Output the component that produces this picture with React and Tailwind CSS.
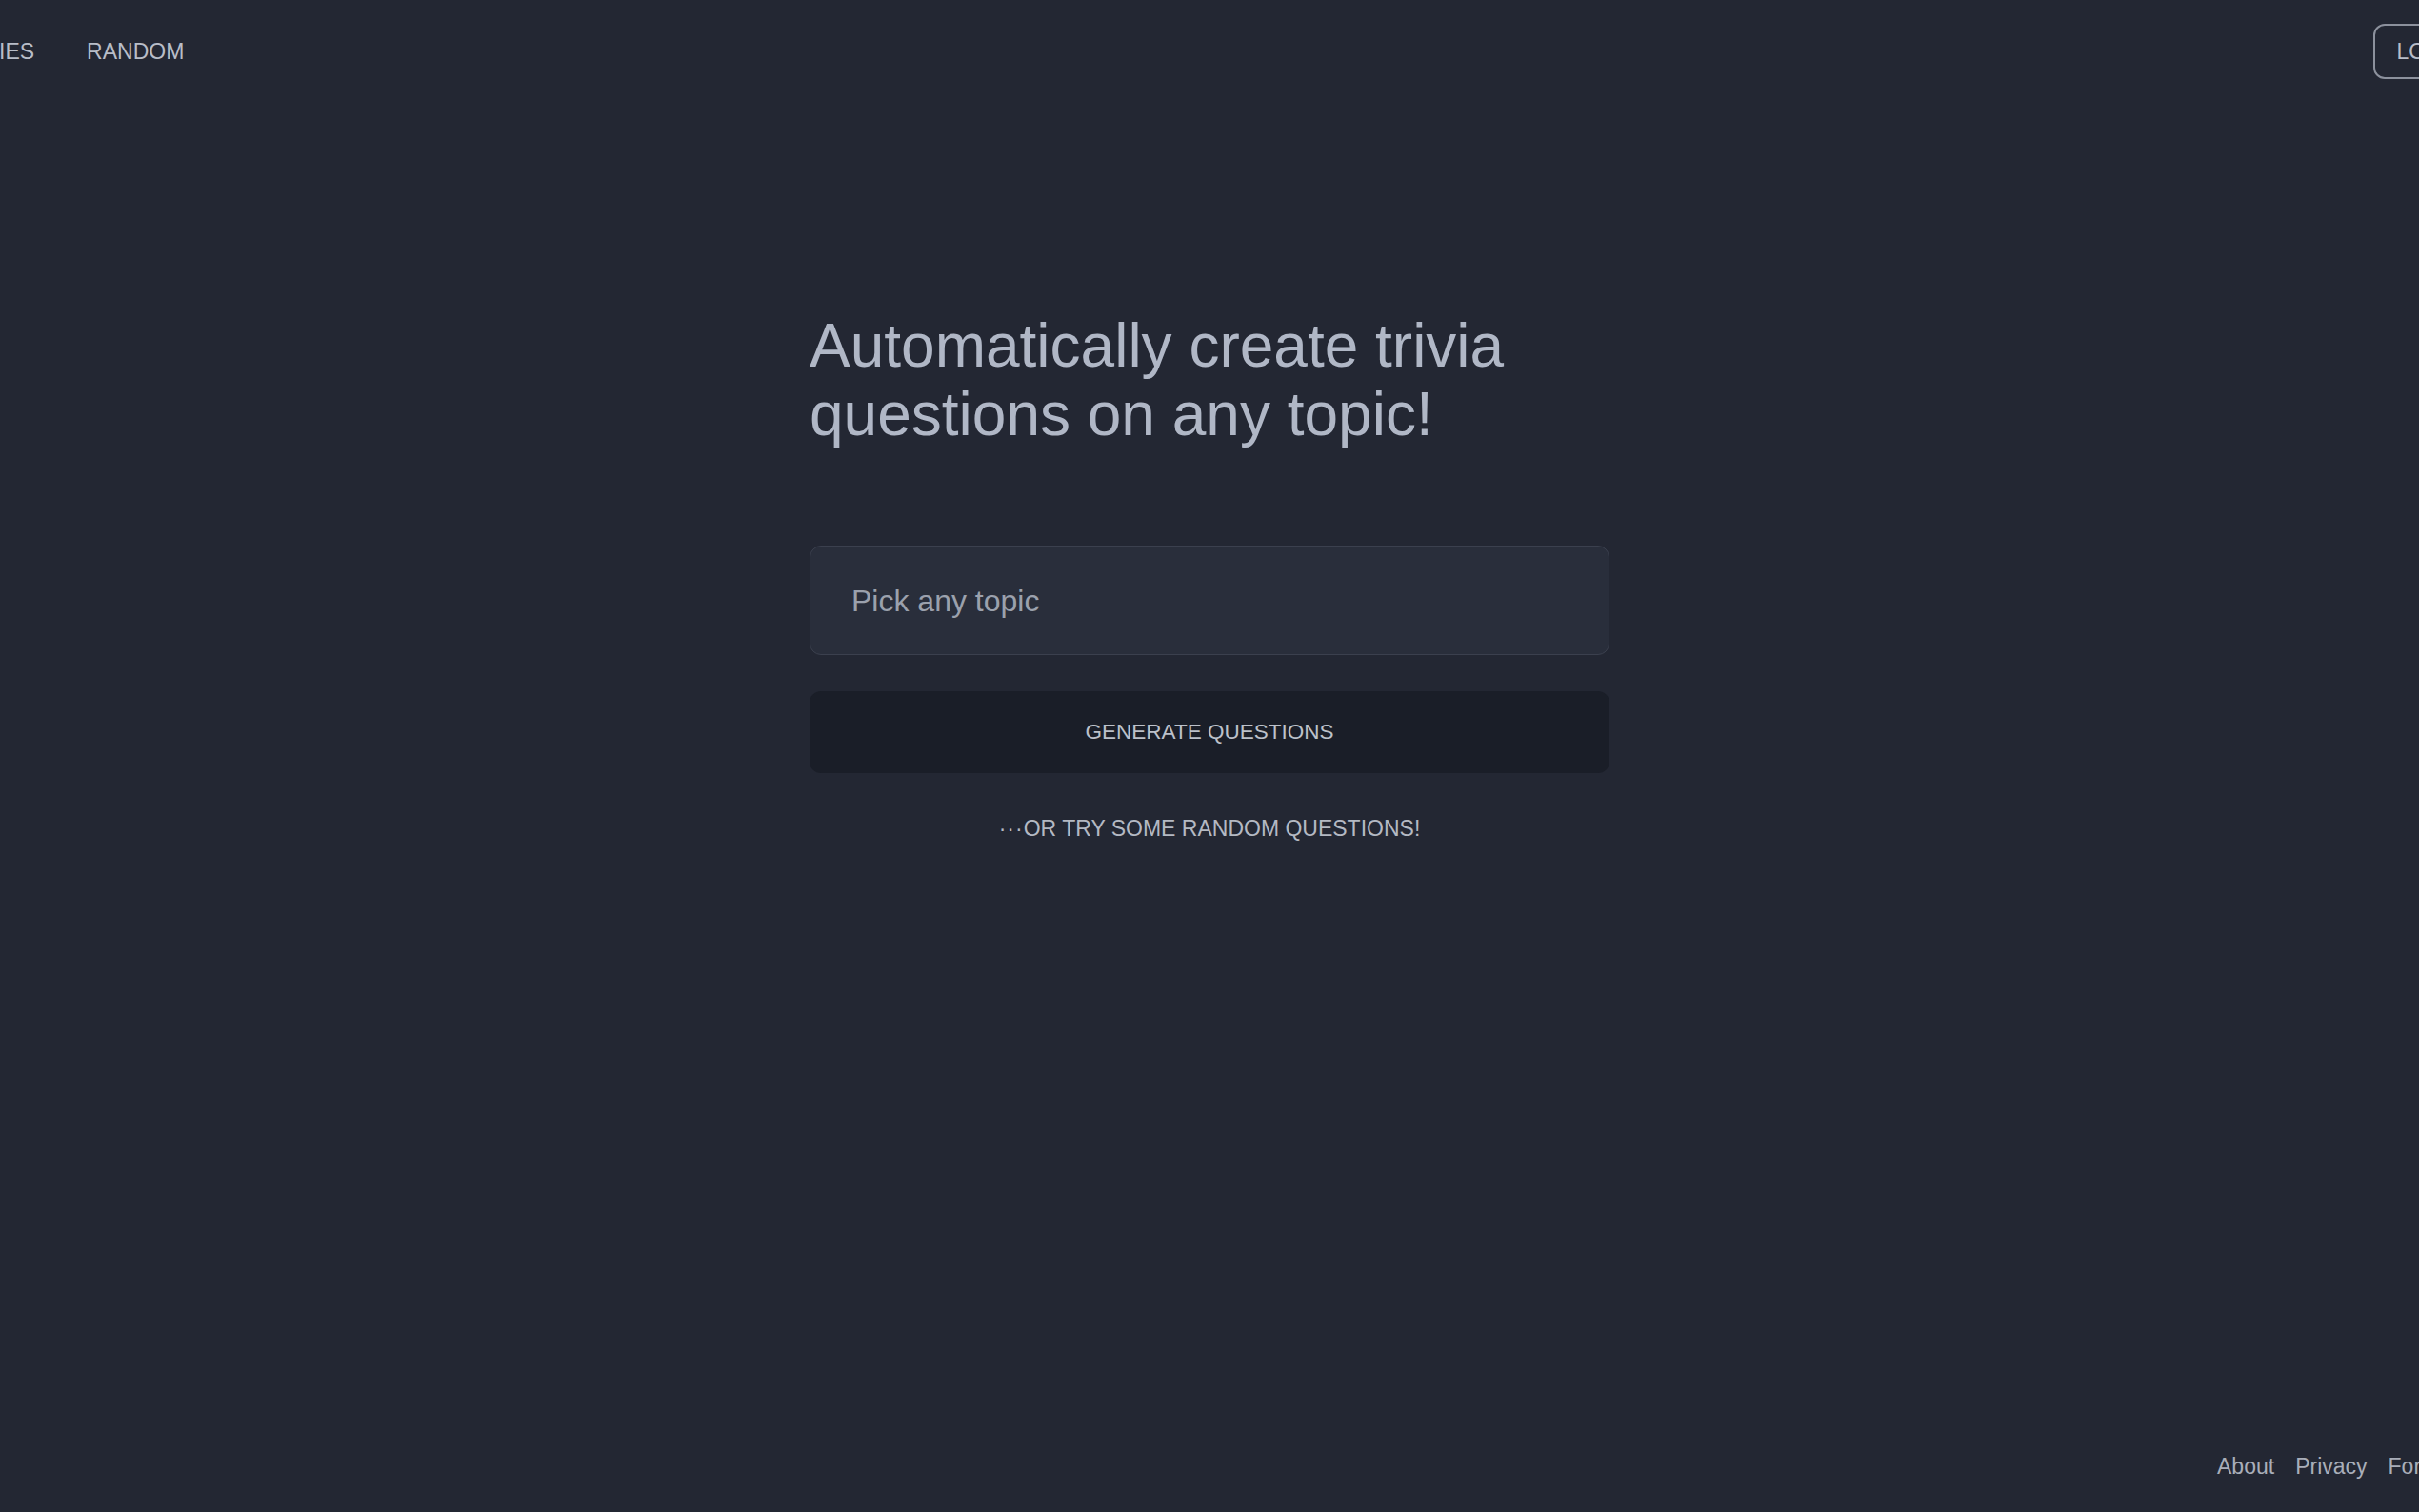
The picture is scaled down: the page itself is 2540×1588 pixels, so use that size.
export default function App() {
  return (
    <div className="w-full h-[1588px] overflow-hidden bg-[#232733] flex flex-col font-['Liberation_Sans',Arial,sans-serif]">
      <header className="flex items-center justify-between pt-[25px]">
        <nav className="ml-[-113px] flex items-center gap-[55px] text-[23px] leading-none text-[#b8bdc8]">
          <a className="block">CATEGORIES</a>
          <a className="block">RANDOM</a>
        </nav>
        <button className="mr-[-72px] h-[58px] px-[22px] rounded-[12px] border-2 border-[#8c919d] text-[23px] text-[#b8bdc8] leading-none">
          LOGIN
        </button>
      </header>

      <main className="flex-1 pt-[244px]">
        <div className="w-[840px] mx-auto flex flex-col">
          <h1 className="text-[64px] leading-[72px] text-[#b0b7c6] font-normal">
            Automatically create trivia
            <br />
            questions on any topic!
          </h1>

          <div className="mt-[102px] h-[115px] rounded-[12px] border border-[#3b404e] bg-[#292e3b] flex items-center px-[43px]">
            <span className="text-[32px] leading-none text-[#9ba1ad]">Pick any topic</span>
          </div>

          <button className="mt-[38px] h-[86px] rounded-[12px] bg-[#1a1e28] text-[22.5px] leading-none text-[#bcc1ca] flex items-center justify-center">
            GENERATE QUESTIONS
          </button>

          <p className="mt-[41px] text-center text-[23px] leading-[34px] text-[#b4b9c3]">
            <span className="tracking-[1px]">···</span>OR TRY SOME RANDOM QUESTIONS!
          </p>
        </div>
      </main>

      <footer className="flex justify-end items-center gap-[22px] mr-[-34px] pb-[31px] text-[23px] leading-[33px] text-[#a9aeb9]">
        <a>About</a>
        <a>Privacy</a>
        <a>Forum</a>
      </footer>
    </div>
  );
}
